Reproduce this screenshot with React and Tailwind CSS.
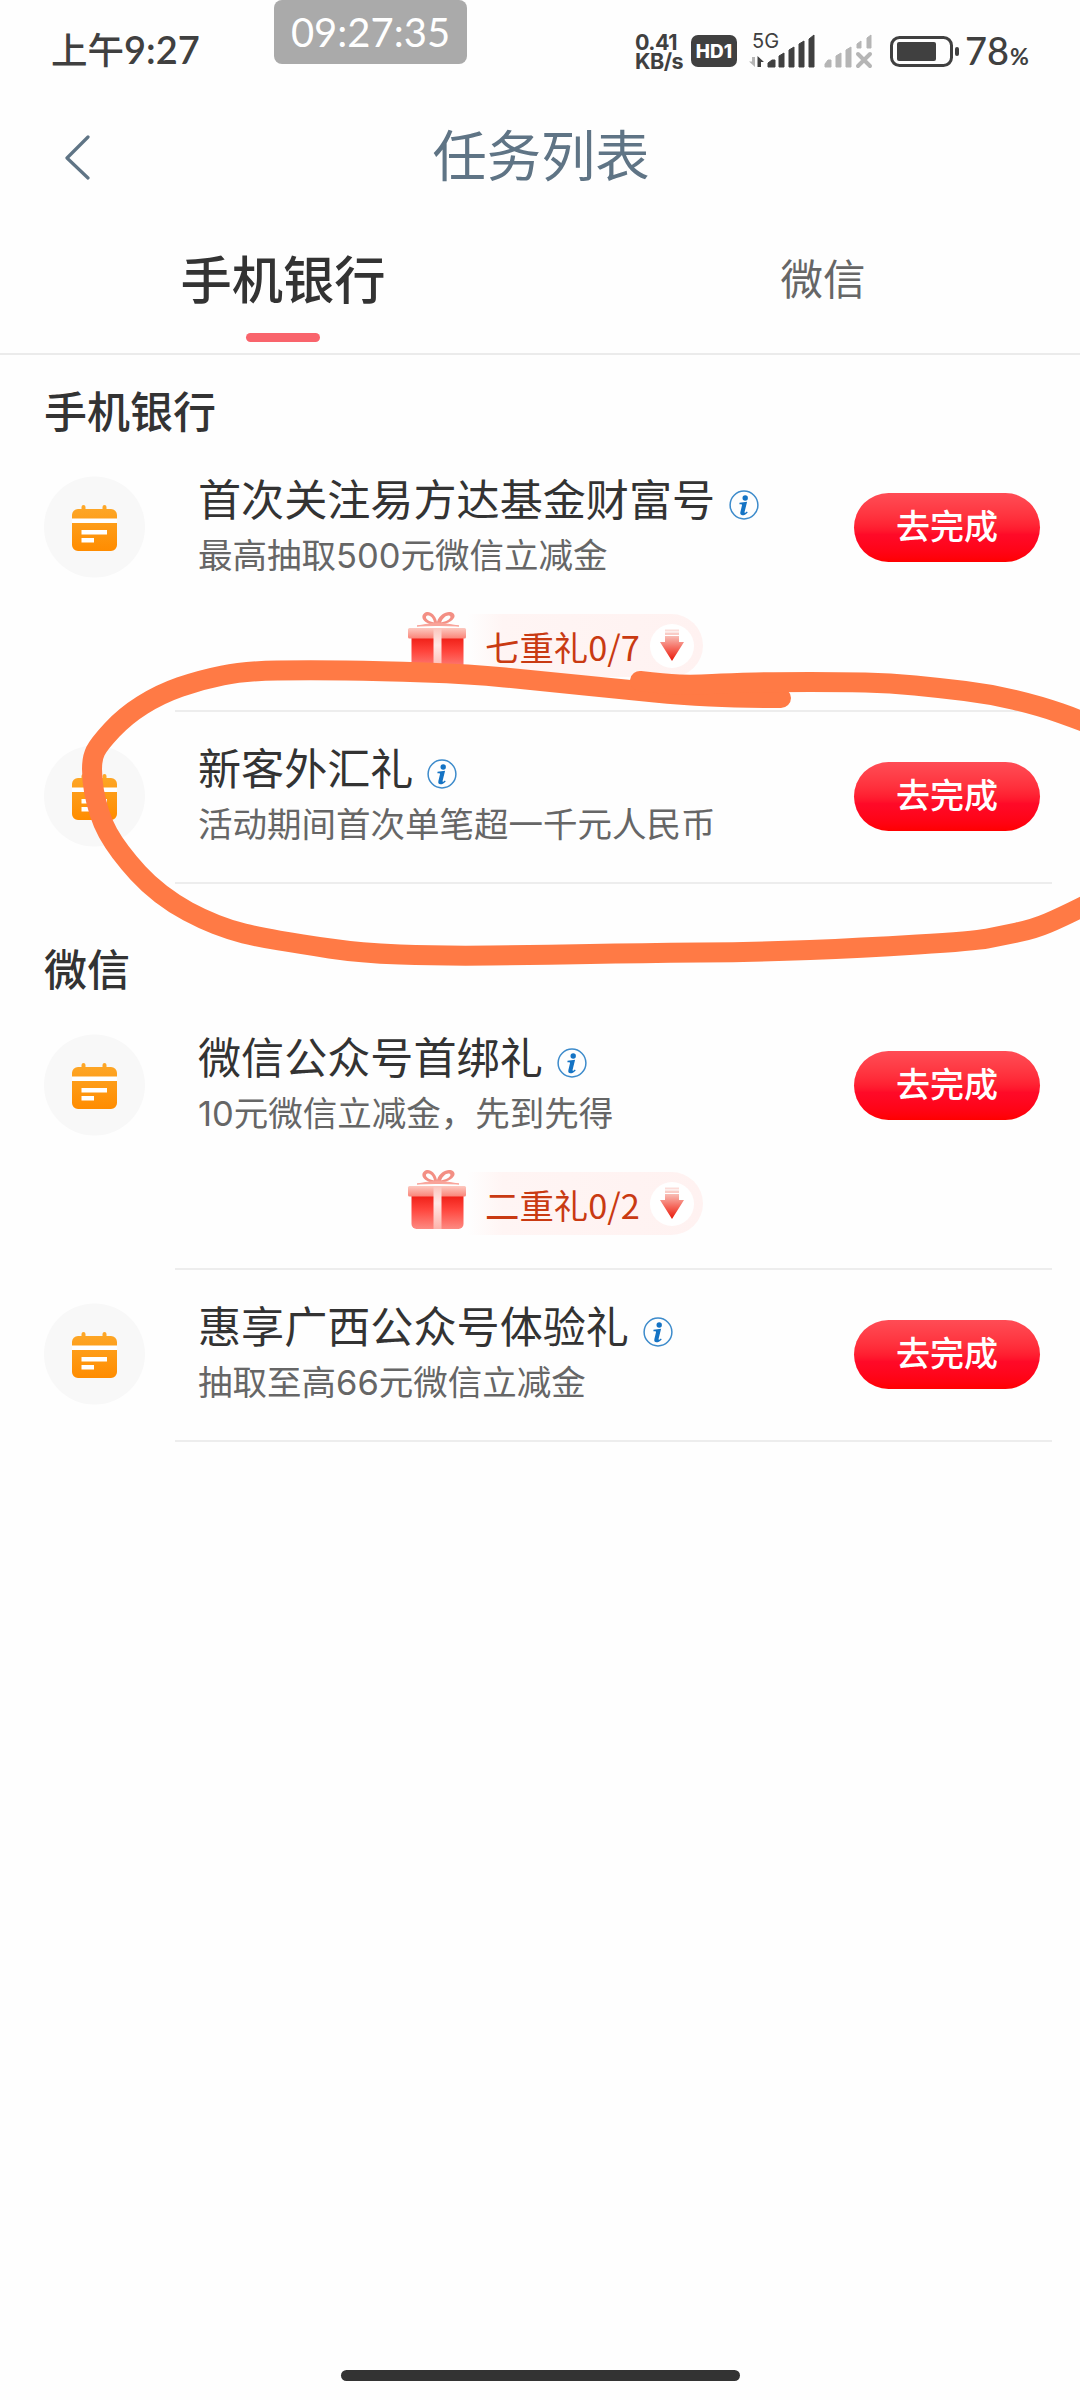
import React from 'react';

const sections = [
  {
    title: '手机银行',
    padding: 'pt-6',
    tasks: [
      { name: '首次关注易方达基金财富号', desc: '最高抽取500元微信立减金', gift: '七重礼0/7' },
      { name: '新客外汇礼', desc: '活动期间首次单笔超一千元人民币' },
    ],
  },
  {
    title: '微信',
    padding: 'pt-[53px]',
    tasks: [
      { name: '微信公众号首绑礼', desc: '10元微信立减金，先到先得', gift: '二重礼0/2' },
      { name: '惠享广西公众号体验礼', desc: '抽取至高66元微信立减金' },
    ],
  },
];

const circlePoints = [
  [781, 698], [740, 698], [680, 695], [630, 690], [540, 681], [470, 674], [380, 671], [310, 670],
  [245, 671], [200, 680], [160, 694], [125, 716], [99, 744], [92, 758], [92, 780], [96, 802],
  [103, 824], [113, 842], [128, 862], [148, 884], [174, 904], [202, 919], [230, 930], [258, 937],
  [300, 944], [360, 953], [440, 956], [540, 955], [640, 953], [760, 952], [860, 948], [975, 941],
  [1000, 936], [1034, 929], [1062, 917], [1100, 898],
];

const tailPoints = [
  [640, 681], [664, 684], [695, 685], [730, 683], [780, 682], [840, 682], [890, 683], [940, 688],
  [990, 694], [1040, 706], [1080, 720], [1110, 733],
];

const smoothPath = (points) => {
  let d = `M${points[0][0]} ${points[0][1]}`;
  for (let i = 1; i < points.length - 1; i++) {
    const [x, y] = points[i];
    const [nx, ny] = points[i + 1];
    d += ` Q${x} ${y} ${(x + nx) / 2} ${(y + ny) / 2}`;
  }
  const last = points[points.length - 1];
  return `${d} L${last[0]} ${last[1]}`;
};

const SignalIcon = () => (
  <svg className="ml-3 h-[36px] w-[67px] shrink-0" viewBox="0 0 67 36" fill="#404040">
    <path d="M6 24v10L0 28.500h3V24z" fill="#b5b5b5" />
    <path d="M8.500 34V23l6.500 6h-3v5z" />
    <path d="M19 34v-4l4-3h3v7zM30 34V23l5-3v14zM40 34V17l5-3v20zM50 34V11l5-3v26zM60 34V6l5-4v32z" stroke="#404040" strokeWidth="1" strokeLinejoin="round" />
  </svg>
);

const NoSignalIcon = () => (
  <svg className="ml-[8px] h-[36px] w-[49px] shrink-0" viewBox="0 0 49 36" fill="#b5b5b5">
    <path d="M1 34v-3l3-4h3v7zM12 34V23l5-3v14zM22 34V17l5-3v20zM33 15v-4l4-3v7zM43 15V5l4-3v13z" stroke="#b5b5b5" strokeWidth="1" strokeLinejoin="round" />
    <path d="M34 21l12 12M46 21L34 33" stroke="#b5b5b5" strokeWidth="4" strokeLinecap="round" />
  </svg>
);

const StatusBar = () => (
  <header className="flex h-[102px] items-start justify-between text-[#404040]">
    <div className="flex items-start">
      <div className="ml-[51px] mt-[25px] w-[223px] whitespace-nowrap text-[36.5px] font-medium leading-[48px]">
        上午<span className="font-['Lato'] text-[38px] font-semibold">9:27</span>
      </div>
      <div className="flex h-16 w-[193px] items-center justify-center rounded-lg bg-[#aaaaaa] font-['Lato'] text-[40px] leading-none text-white">
        09:27:35
      </div>
    </div>
    <div className="mr-[49px] mt-[33px] flex h-[36px] items-center font-['Inter']">
      <div className="mt-[2px] w-[56px] text-[21.5px] font-bold leading-[19px] tracking-[-0.5px]">
        <div>0.41</div>
        <div>KB/s</div>
      </div>
      <div className="flex h-8 w-[46px] items-center justify-center rounded-[7px] bg-[#404040] text-[19px] font-extrabold leading-none text-white">
        HD1
      </div>
      <div className="flex">
        <div className="relative flex">
          <SignalIcon />
          <span className="absolute left-[15px] top-[-2px] text-[20px] leading-[20px]">5G</span>
        </div>
      </div>
      <NoSignalIcon />
      <svg className="ml-[17px] h-[32px] w-[71px] shrink-0" viewBox="0 0 71 32">
        <rect x="1.500" y="2.500" width="60" height="28" rx="8" fill="none" stroke="#404040" strokeWidth="3" />
        <rect x="7" y="7" width="39" height="19" rx="2" fill="#404040" />
        <rect x="65" y="12" width="4" height="9" rx="2" fill="#404040" />
      </svg>
      <div className="ml-[4px] flex w-[66px] items-baseline pt-[4px] font-['Lato'] text-[38px] font-medium leading-[36px]">
        78<span className="ml-[1px] text-[23px] font-bold">%</span>
      </div>
    </div>
  </header>
);

const CalendarIcon = () => (
  <svg className="size-[102px] shrink-0" viewBox="0 0 102 102">
    <defs>
      <linearGradient id="calendar" x1="0" y1="0" x2="0" y2="1">
        <stop offset="0" stopColor="#fda829" />
        <stop offset="1" stopColor="#ff8c00" />
      </linearGradient>
    </defs>
    <circle cx="51.500" cy="51" r="50.500" fill="#f8f8f8" />
    <path
      d="M38.500 33v-2a2 2 0 0 1 4 0v2h17v-2a2 2 0 0 1 4 0v2H68a6 6 0 0 1 6 6v30a6 6 0 0 1-6 6H35a6 6 0 0 1-6-6V39a6 6 0 0 1 6-6z"
      fill="url(#calendar)"
    />
    <path d="M29 42.500h45v4.500H29zM38.500 54h25.500v4.500H38.500zM38.500 62h12.500v4.500H38.500z" fill="#fff" />
  </svg>
);

const InfoIcon = () => (
  <svg className="mt-[10px] size-[30px] shrink-0" viewBox="0 0 30 30">
    <circle cx="15" cy="15" r="13.900" fill="none" stroke="#3d8bcb" strokeWidth="1.500" />
    <circle cx="16.200" cy="8" r="2.700" fill="#1473c4" />
    <path d="M10.500 12.700l7.600-.9-2.500 10c-.2 1.400.5 1.400 2.300-.2l.8.800c-3.800 4-8.300 3.700-7.300-.4l1.600-6.700c.2-1-.5-1.200-2.600-1z" fill="#1473c4" />
  </svg>
);

const GiftIcon = () => (
  <svg className="h-[62px] w-[60px] shrink-0" viewBox="0 0 60 62">
    <defs>
      <linearGradient id="giftBox" x1="0" y1="0" x2="0" y2="1">
        <stop offset="0" stopColor="#f02018" />
        <stop offset="0.4" stopColor="#ff443c" />
        <stop offset="1" stopColor="#fd8a82" />
      </linearGradient>
      <linearGradient id="giftLid" x1="0" y1="0" x2="0" y2="1">
        <stop offset="0" stopColor="#fcc9c0" />
        <stop offset="1" stopColor="#fa8478" />
      </linearGradient>
      <linearGradient id="giftRibbon" x1="0" y1="0" x2="0" y2="1">
        <stop offset="0" stopColor="#fbc5bd" />
        <stop offset="0.4" stopColor="#ffe9e6" />
        <stop offset="1" stopColor="#fdb3ab" />
      </linearGradient>
    </defs>
    <path d="M4.500 27h52v28a5 5 0 0 1-5 5h-42a5 5 0 0 1-5-5z" fill="url(#giftBox)" />
    <rect x="1" y="17" width="58" height="10.500" rx="1.500" fill="url(#giftLid)" />
    <path d="M26.500 17h8v43h-8z" fill="url(#giftRibbon)" />
    <path
      d="M29 14C16 13 13 6 17 2.500 21-1 28 2 30 11 33 2 42-1 46.500 2.500 50 6 45 12 32 14zM27 11.500C26 6 22 3.500 19.500 5c-2 2 1.500 5.500 7.500 6.500zM34 11.500C40 10.500 45 7 43 5c-3-1.500-7 1.500-9 6.500z"
      fill="#f38f84"
      fillRule="evenodd"
    />
    <path d="M10 15l18-3h5l19 3-19-.5h-5z" fill="#f9a399" stroke="#f9a399" strokeWidth="1" />
  </svg>
);

const GiftPill = ({ text }) => (
  <div className="flex items-start pl-[407px]">
    <GiftIcon />
    <div className="mt-[3px] flex h-[63px] w-[236px] items-center rounded-r-full bg-gradient-to-r from-[#fefefe] via-[#fff5f4] via-15% to-[#fff2f1] pl-[18px]">
      <span className="w-[165px] whitespace-nowrap pt-[1px] text-[34.4px] leading-none text-[#c93a12]">{text}</span>
      <svg className="size-[44px] shrink-0" viewBox="0 0 44 44">
        <defs>
          <linearGradient id="arrow" x1="0" y1="0" x2="0" y2="1">
            <stop offset="0" stopColor="#f8bdb5" />
            <stop offset="0.5" stopColor="#f5685c" />
            <stop offset="1" stopColor="#e81808" />
          </linearGradient>
        </defs>
        <circle cx="22" cy="22" r="22" fill="#fff" />
        <path d="M15 5.500h14v2H15z" fill="#fbdcd8" />
        <path d="M15 8.500h14v2.500H15z" fill="#f9ccc6" />
        <path d="M15 12h14v6h5L22 37 10 18h5z" fill="url(#arrow)" />
      </svg>
    </div>
  </div>
);

const TaskRow = ({ task }) => (
  <li>
    <div className="flex h-[170px] items-start pl-[43px] pt-[33px]">
      <CalendarIcon />
      <div className="ml-[53px] mt-[-7px] w-[656px] whitespace-nowrap">
        <div className="flex h-[62px] items-center">
          <h3 className="pb-[5px] text-[43.1px] leading-none text-[#333333]">{task.name}</h3>
          <span className="ml-[14px]">
            <InfoIcon />
          </span>
        </div>
        <p className="pt-px font-['Inter','Noto_Sans_CJK_SC',sans-serif] text-[34.5px] leading-[48px] text-[#666666]">{task.desc}</p>
      </div>
      <button className="mt-[17px] h-[69px] w-[186px] rounded-full bg-gradient-to-b from-[#ff4c55] via-[#ff0a28] via-60% to-[#ff0000] pb-[5px] text-[34px] font-medium leading-none text-white">
        去完成
      </button>
    </div>
    {task.gift ? (
      <div className="flex h-[97px] items-start">
        <div className="mt-[-2px]">
          <GiftPill text={task.gift} />
        </div>
      </div>
    ) : null}
    <div className="ml-[175px] h-[2px] w-[877px] bg-[#ededed]" />
  </li>
);

const App = () => {
  return (
    <div className="relative flex h-[2400px] w-[1080px] flex-col overflow-hidden bg-[#fefefe] font-['Noto_Sans_CJK_SC',sans-serif]">
      <StatusBar />

      <div className="grid h-[108px] grid-cols-[160px_1fr_160px] items-center">
        <svg className="ml-[63px] size-[48px]" viewBox="0 0 48 48" fill="none" stroke="#5f7485" strokeWidth="3.200" strokeLinecap="round" strokeLinejoin="round">
          <path d="M25 5L4 26l21 20" />
        </svg>
        <h1 className="pb-[5px] pl-[2px] text-center text-[54.3px] leading-none text-[#5f7485]">任务列表</h1>
      </div>

      <nav className="grid h-[145px] grid-cols-[566px_1fr] border-b-2 border-[#ebebeb]">
        <div className="flex flex-col items-center pt-[39px] text-[51.3px] font-medium leading-[56px] text-[#333333]">
          手机银行
          <span className="mt-[28px] h-[9px] w-[74px] rounded-full bg-[#f9646c]" />
        </div>
        <div className="pt-[39px] text-center text-[42.5px] leading-[56px] text-[#666666]">微信</div>
      </nav>

      <main>
        {sections.map((section) => (
          <section key={section.title} className={section.padding}>
            <h2 className="h-16 pl-[44px] text-[43px] font-medium leading-[60px] text-[#333333]">{section.title}</h2>
            <ul>
              {section.tasks.map((task) => (
                <TaskRow key={task.name} task={task} />
              ))}
            </ul>
          </section>
        ))}
      </main>

      <div className="mx-auto mb-[19px] mt-auto h-[11px] w-[399px] rounded-full bg-[#333333]" />

      {/* Hand drawn highlight */}
      <svg className="pointer-events-none absolute left-0 top-0 h-[2400px] w-[1080px]" viewBox="0 0 1080 2400" fill="none" stroke="#ff7a45" strokeWidth="20" strokeLinecap="round" strokeLinejoin="round">
        <path d={smoothPath(circlePoints)} />
        <path d={smoothPath(tailPoints)} />
      </svg>
    </div>
  );
};

export default App;
